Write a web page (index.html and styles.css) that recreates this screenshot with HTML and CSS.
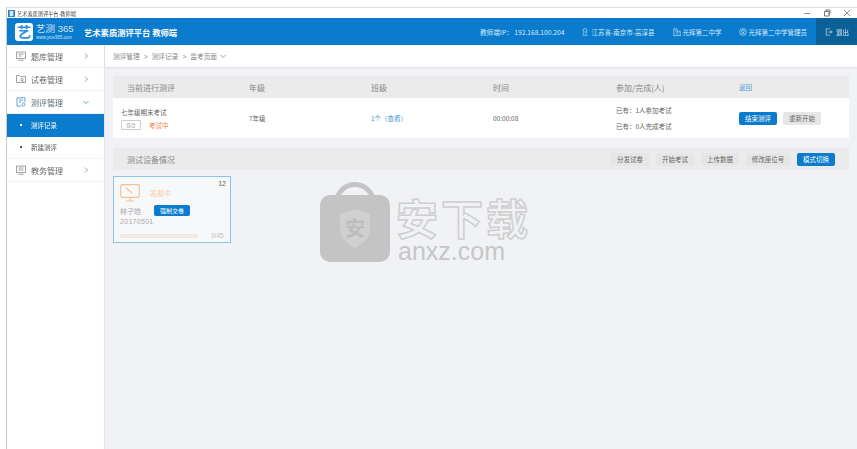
FILE: index.html
```html
<!DOCTYPE html>
<html lang="zh-CN">
<head>
  <meta charset="UTF-8" />
  <title>艺术素质测评平台-教师端</title>
  <link rel="stylesheet" href="styles.css">
</head>
<body>
  <div class="window">
    <div class="titlebar">
      <svg class="title-icon" viewBox="0 0 8 8"><rect width="8" height="8" fill="#2f7fc8"/><rect x="2" y="1" width="4" height="6" fill="#dce9f5"/></svg>
      <span class="title-text">艺术素质测评平台-教师端</span>
      <div class="win-controls">
        <svg viewBox="0 0 8 8"><path d="M1 4.500h6" stroke="#777" fill="none"/></svg>
        <svg viewBox="0 0 8 8"><path d="M1.500 2.500h4.500v4.500h-4.500zM3 2.500v-1.500h4v4h-1" stroke="#555" fill="none"/></svg>
        <svg viewBox="0 0 8 8"><path d="M1 1l6 6M7 1l-6 6" stroke="#777" fill="none"/></svg>
      </div>
    </div>

    <header class="topbar">
      <div class="logo">
        <div class="logo-mark">艺</div>
        <div class="logo-words">
          <span class="logo-name">艺测 365</span>
          <span class="logo-url">www.yice365.com</span>
        </div>
      </div>
      <div class="app-name">艺术素质测评平台 教师端</div>
      <div class="top-info">
        <span class="info-ip">教师端IP： 192.168.100.204</span>
        <span class="info-item info-place">
          <svg viewBox="0 0 10 10"><circle cx="5" cy="3" r="2.300"/><path d="M3 5.500v2M7 5.500v2M1.500 9h7"/></svg>
          江苏省-南京市-高淳县
        </span>
        <span class="info-item info-school">
          <svg viewBox="0 0 10 10"><path d="M1 9V1h4v8M5 4h4v5M0 9.500h10M2.500 3h1M2.500 5h1M6.500 6h1"/></svg>
          光辉第二中学
        </span>
        <span class="info-item info-user">
          <svg viewBox="0 0 10 10"><circle cx="5" cy="5" r="4.300"/><circle cx="5" cy="4" r="1.700"/><path d="M2.500 8c.5-2 4.500-2 5 0"/></svg>
          光辉第二中学管理员
        </span>
      </div>
      <div class="logout">
        <svg viewBox="0 0 10 10"><path d="M6 1H1.500v8H6M4 5h5M7 3l2 2-2 2"/></svg>
        退出
      </div>
    </header>

    <div class="layout">
      <nav class="sidebar">
        <div class="nav-item">
          <svg class="nav-icon" viewBox="0 0 10 10"><path d="M.5 1h9v6.500h-9zM2.500 9.300h5M2.500 3h5M2.500 5h3"/></svg>
          <span class="nav-label">题库管理</span>
          <svg class="nav-arrow" viewBox="0 0 6 6"><path d="M2 .5L4.500 3 2 5.500"/></svg>
        </div>
        <div class="nav-item">
          <svg class="nav-icon" viewBox="0 0 10 10"><path d="M.5 1.500h3l1 1h5v6h-9zM6 6.500l2 2"/><circle cx="6" cy="5.500" r="1.200"/></svg>
          <span class="nav-label">试卷管理</span>
          <svg class="nav-arrow" viewBox="0 0 6 6"><path d="M2 .5L4.500 3 2 5.500"/></svg>
        </div>
        <div class="nav-item is-open">
          <svg class="nav-icon" viewBox="0 0 10 10"><path d="M9 5V.8H1v8.400h4.500M3 3h4M3 5h2"/><circle cx="7.500" cy="7.500" r="1.500"/></svg>
          <span class="nav-label">测评管理</span>
          <svg class="nav-arrow" viewBox="0 0 6 6"><path d="M.5 2L3 4.500 5.500 2"/></svg>
        </div>
        <div class="nav-sub is-active"><i></i>测评记录</div>
        <div class="nav-sub"><i></i>新建测评</div>
        <div class="nav-item">
          <svg class="nav-icon" viewBox="0 0 10 10"><path d="M.5 1h9v6.500h-9zM2.500 9.300h5M2.500 3h5M2.500 5h5"/></svg>
          <span class="nav-label">教务管理</span>
          <svg class="nav-arrow" viewBox="0 0 6 6"><path d="M2 .5L4.500 3 2 5.500"/></svg>
        </div>
      </nav>

      <main class="main">
        <div class="crumbs">
          <span>测评管理</span><b>&gt;</b><span>测评记录</span><b>&gt;</b><span>监考页面</span>
          <svg viewBox="0 0 6 6"><path d="M.5 2L3 4.500 5.500 2"/></svg>
        </div>

        <div class="content">
          <section class="panel">
            <div class="exam-head">
              <span>当前进行测评</span>
              <span>年级</span>
              <span>班级</span>
              <span>时间</span>
              <span>参加/完成(人)</span>
              <a class="back-link">返回</a>
            </div>
            <div class="exam-row">
              <div class="exam-name">
                <div>七年级期末考试</div>
                <div class="exam-tags"><span class="tag">综合</span><span class="exam-state">考试中</span></div>
              </div>
              <div>7年级</div>
              <div class="link-blue">1个（查看）</div>
              <div>00:00:08</div>
              <div class="exam-count">
                <div>已有：1人参加考试</div>
                <div>已有：0人完成考试</div>
              </div>
              <div class="exam-actions">
                <button class="btn btn-primary">结束测评</button>
                <button class="btn">重新开始</button>
              </div>
            </div>
          </section>

          <section class="device-head">
            <span class="device-title">测试设备情况</span>
            <div class="device-actions">
              <button class="btn">分发试卷</button>
              <button class="btn">开始考试</button>
              <button class="btn">上传数据</button>
              <button class="btn btn-wide">修改座位号</button>
              <button class="btn btn-primary">模式切换</button>
            </div>
          </section>

          <div class="seat-card">
            <span class="seat-no">12</span>
            <div class="seat-top">
              <svg class="seat-icon" viewBox="0 0 20 18"><rect x=".7" y=".7" width="18.600" height="12.600" rx="1.500"/><path d="M6 4l6 5M10 13.500v3M5.500 17h9"/></svg>
              <span class="seat-state">答题中</span>
            </div>
            <div class="seat-user"><span>林子晗</span><button class="btn btn-primary btn-small">强制交卷</button></div>
            <div class="seat-id">20170501</div>
            <div class="seat-progress"><div class="bar"></div><span>0/45</span></div>
          </div>
        </div>

        <div class="watermark">
          <svg class="wm-bag" viewBox="0 0 70 80">
            <path d="M16 22C18 -4 52 -4 54 22" fill="none" stroke="#c4c4c4" stroke-width="5"/>
            <rect y="13" width="70" height="67" rx="10" fill="#c4c4c4"/>
            <path d="M20 32l15-5 15 5v16c0 8-8 14-15 18-7-4-15-10-15-18z" fill="#d0d0d0"/>
            <text x="35" y="54" text-anchor="middle" class="wm-bag-text">安</text>
          </svg>
          <div class="wm-words">
            <div class="wm-cn">安下载</div>
            <div class="wm-en">anxz.com</div>
          </div>
        </div>
      </main>
    </div>
  </div>
</body>
</html>
```

FILE: styles.css
```css
:root {
  --blue: #0a7bcd;
  --blue-dark: #0b6197;
  --page: #f0f2f5;
  --head: #ebebeb;
  --text: #555;
  --muted: #888;
}

* {
  box-sizing: border-box;
}

body {
  margin: 0;
  height: 449px;
  overflow: hidden;
  background: #fff;
  color: var(--text);
  font-family: "Noto Sans CJK SC", "Liberation Sans", sans-serif;
  font-size: 7px;
}

svg {
  fill: none;
  stroke: currentColor;
  stroke-width: 0.8;
}

/* the reference is a scaled-down capture, everything is slightly soft */
.window {
  margin: 7px 0 0 6px;
  height: 442px;
  border-top: 1px solid #ddd;
  border-left: 1px solid #ccc;
  display: flex;
  flex-direction: column;
  filter: blur(0.35px);
}

.titlebar {
  height: 10px;
  flex: none;
  display: flex;
  align-items: center;
  padding-left: 1px;
  color: #444;
}

.title-icon {
  width: 7px;
  height: 7px;
  stroke: none;
}

.title-text {
  margin-left: 2px;
  font-size: 5.200px;
}

.win-controls {
  margin-left: auto;
  margin-right: 6px;
  display: flex;
  gap: 12px;
}

.win-controls svg {
  width: 8px;
  height: 8px;
}

.topbar {
  height: 27px;
  flex: none;
  background: var(--blue);
  color: #fff;
  display: flex;
  align-items: center;
  padding-left: 8px;
}

.logo {
  display: flex;
  align-items: center;
  gap: 3px;
}

.logo-mark {
  width: 18px;
  height: 18px;
  border-radius: 3px;
  background: #fff;
  color: #2c8fe0;
  font-size: 14px;
  font-weight: 700;
  line-height: 17px;
  text-align: center;
}

.logo-words {
  width: 39px;
  display: flex;
  flex-direction: column;
  gap: 0.5px;
  color: #cfe5f6;
  font-family: "Liberation Sans", "Noto Sans CJK SC", sans-serif;
}

.logo-name {
  font-size: 9.500px;
  line-height: 11px;
  white-space: nowrap;
}

.logo-url {
  font-size: 4.500px;
  line-height: 5px;
  white-space: nowrap;
}

.app-name {
  margin-left: 9px;
  font-size: 8.300px;
  font-weight: 700;
}

.top-info {
  margin-left: auto;
  display: flex;
  align-items: center;
  font-size: 6.500px;
  color: #d5e9f8;
}

.info-ip {
  margin-right: 17px;
  font-size: 6.700px;
}

.info-item {
  display: flex;
  align-items: center;
  gap: 2px;
}

.info-item svg {
  width: 8px;
  height: 8px;
}

.info-place {
  margin-right: 18px;
}

.info-school {
  margin-right: 17px;
}

.info-user {
  margin-right: 9px;
}

.logout {
  width: 41px;
  height: 100%;
  background: var(--blue-dark);
  display: flex;
  align-items: center;
  gap: 3px;
  padding-left: 9px;
  font-size: 6.500px;
  color: #dbeaf5;
}

.logout svg {
  width: 8px;
  height: 8px;
}

.layout {
  flex: 1;
  display: flex;
  min-height: 0;
}

.sidebar {
  width: 98px;
  flex: none;
  background: #fff;
  border-right: 1px solid #e6e6e6;
}

.nav-item {
  height: 23px;
  display: flex;
  align-items: center;
  padding-left: 9px;
  border-bottom: 1px solid #f2f2f2;
  font-size: 8px;
  color: #666;
}

.nav-icon {
  width: 10px;
  height: 10px;
  color: #888;
}

.nav-label {
  margin-left: 5px;
  width: 52px;
}

.nav-arrow {
  width: 6px;
  height: 6px;
  color: #888;
}

.nav-item.is-open .nav-icon,
.nav-item.is-open .nav-arrow {
  color: #3f8fca;
}

.nav-item.is-open .nav-label {
  color: #5a6a78;
}

.nav-sub {
  height: 22.500px;
  display: flex;
  align-items: center;
  gap: 9px;
  padding-left: 13px;
  font-size: 6.500px;
  border-bottom: 1px solid #f5f5f5;
}

.nav-sub i {
  width: 2px;
  height: 2px;
  background: currentColor;
}

.nav-sub.is-active {
  background: var(--blue);
  color: #fff;
  border-bottom: none;
}

.main {
  flex: 1;
  position: relative;
  background: var(--page);
  display: flex;
  flex-direction: column;
  min-width: 0;
}

.crumbs {
  height: 22px;
  flex: none;
  background: #fff;
  box-shadow: 0 1px 2px rgba(0, 0, 0, 0.08);
  display: flex;
  align-items: center;
  gap: 4px;
  padding-left: 8px;
  font-size: 6.700px;
  color: #888;
}

.crumbs b {
  font-weight: 400;
  font-family: "Liberation Sans", sans-serif;
}

.crumbs svg {
  width: 6px;
  height: 6px;
  margin-left: -1px;
}

.content {
  padding: 9px 8px 0;
}

.exam-head,
.exam-row {
  display: grid;
  grid-template-columns: 122px 122px 122px 123px 123px 1fr;
  align-items: center;
}

.exam-head {
  height: 22px;
  background: var(--head);
  padding-left: 14px;
  font-size: 8px;
  color: #888;
}

.back-link {
  font-size: 6.500px;
  color: #4a9ad6;
}

.exam-row {
  height: 40px;
  background: #fff;
  padding-left: 14px;
  font-size: 6.500px;
  color: #666;
}

.exam-name {
  margin-left: -6px;
  display: flex;
  flex-direction: column;
  gap: 3px;
  line-height: 10px;
}

.exam-tags {
  display: flex;
  align-items: center;
  gap: 8px;
}

.tag {
  width: 20px;
  height: 10px;
  border: 1px solid #ccc;
  border-radius: 1px;
  font-size: 4.500px;
  line-height: 8px;
  text-align: center;
  color: #888;
}

.exam-state {
  color: #f47f3e;
}

.link-blue {
  color: #3f93d4;
}

.exam-count {
  display: flex;
  flex-direction: column;
  gap: 6px;
  line-height: 10px;
}

.exam-actions {
  display: flex;
  gap: 6px;
}

.btn {
  width: 38px;
  height: 13px;
  padding: 0;
  border: none;
  border-radius: 2px;
  background: #e6e6e6;
  color: #666;
  font-family: inherit;
  font-size: 6.500px;
  line-height: 13px;
}

.btn-primary {
  background: var(--blue);
  color: #fff;
}

.btn-wide {
  width: 44px;
}

.device-head {
  margin-top: 10px;
  height: 22px;
  background: var(--head);
  padding: 0 14px;
  display: flex;
  align-items: center;
  justify-content: space-between;
}

.device-title {
  font-size: 8px;
  color: #888;
}

.device-actions {
  display: flex;
  gap: 7px;
}

.seat-card {
  position: relative;
  width: 118px;
  height: 67px;
  margin-top: 6px;
  padding: 7px 6px 0;
  background: #f7f8fa;
  border: 1px solid #8cc4ea;
  color: #aaa;
}

.seat-no {
  position: absolute;
  top: 3px;
  right: 4px;
  font-family: "Liberation Sans", sans-serif;
  font-size: 7px;
  color: #666;
}

.seat-top {
  display: flex;
  align-items: center;
  gap: 10px;
}

.seat-icon {
  width: 20px;
  height: 18px;
  color: #f5c093;
  stroke-width: 1.200;
}

.seat-state {
  font-size: 7px;
  color: #f8cfa8;
}

.seat-user {
  margin-top: 3px;
  display: flex;
  align-items: center;
  gap: 13px;
  font-size: 7px;
}

.btn-small {
  width: 36px;
  height: 11px;
  font-size: 6px;
  line-height: 11px;
}

.seat-id {
  margin-top: 1px;
  font-family: "Liberation Sans", sans-serif;
  font-size: 7px;
  line-height: 10px;
  letter-spacing: 0.3px;
}

.seat-progress {
  margin-top: 5px;
  display: flex;
  align-items: center;
  gap: 13px;
  font-family: "Liberation Sans", sans-serif;
  font-size: 6.500px;
  color: #c3bdb6;
}

.bar {
  width: 78px;
  height: 4px;
  border-radius: 2px;
  background: #f5ebe0;
  border: 1px solid #ece6df;
}

.watermark {
  position: absolute;
  left: 215px;
  top: 137px;
  display: flex;
  gap: 6px;
  pointer-events: none;
}

.wm-bag {
  width: 70px;
  height: 80px;
  stroke: none;
}

.wm-bag-text {
  fill: #bdbdbd;
  font-size: 20px;
  font-weight: 700;
}

.wm-words {
  margin-top: 13px;
  display: flex;
  flex-direction: column;
}

.wm-cn {
  font-size: 42px;
  line-height: 44px;
  letter-spacing: 3px;
  font-weight: 700;
  color: var(--page);
  -webkit-text-stroke: 1.500px #cfcfcf;
}

.wm-en {
  margin-top: 1px;
  margin-left: 2px;
  font-family: "Liberation Sans", sans-serif;
  font-size: 25px;
  line-height: 22px;
  color: #c6c6c6;
}
```
